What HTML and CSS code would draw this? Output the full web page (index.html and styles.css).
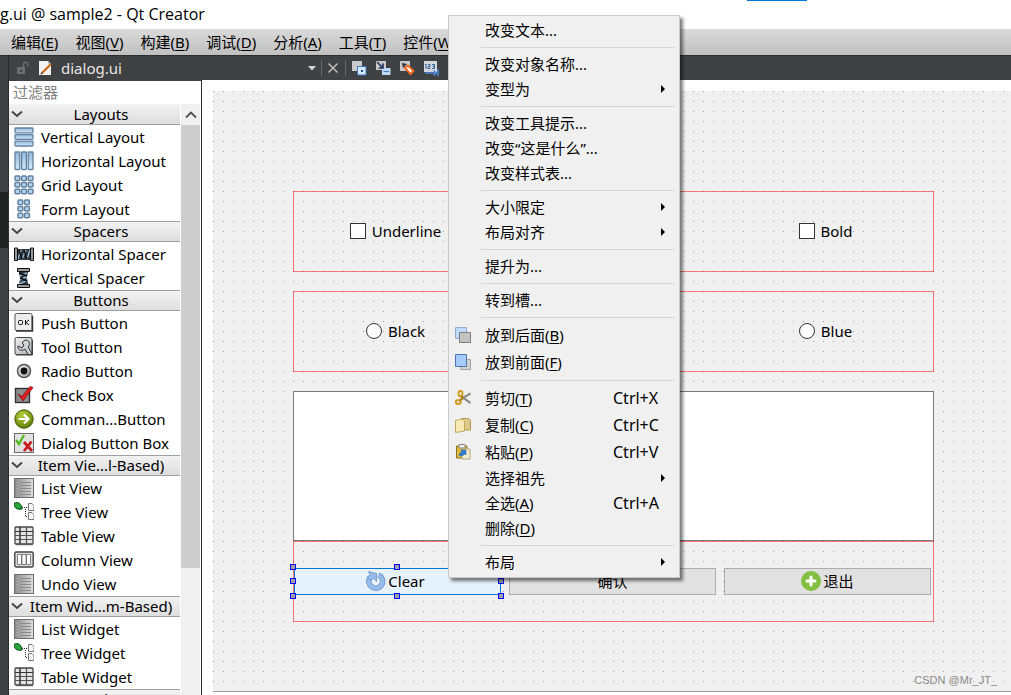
FILE: index.html
```html
<!DOCTYPE html>
<html lang="zh-CN">
<head>
<meta charset="utf-8">
<title>dialog.ui @ sample2 - Qt Creator</title>
<link rel="stylesheet" href="styles.css">
</head>
<body>
<svg class="defs" aria-hidden="true">
  <defs>
    <linearGradient id="blue" x1="0" y1="0" x2="0" y2="1"><stop offset="0" stop-color="#8fb9dc"/><stop offset="1" stop-color="#d3ebfb"/></linearGradient>
    <linearGradient id="grey" x1="0" y1="0" x2="1" y2="1"><stop offset="0" stop-color="#f4f4f4"/><stop offset="1" stop-color="#a8a8a8"/></linearGradient>
    <linearGradient id="list" x1="0" y1="0" x2="1" y2="0"><stop offset="0" stop-color="#8a8a8a"/><stop offset="1" stop-color="#dedede"/></linearGradient>
    <radialGradient id="olive" cx=".4" cy=".3" r=".8"><stop offset="0" stop-color="#b5cf3a"/><stop offset="1" stop-color="#567400"/></radialGradient>
    <symbol id="i-chev" viewBox="0 0 12 8"><path d="M1 1.500L6 6L11 1.500" fill="none" stroke="#444" stroke-width="2"/></symbol>
    <symbol id="i-vl" viewBox="0 0 20 20"><g fill="url(#blue)" stroke="#64809f" stroke-width="1.300"><rect x="1" y="1" width="18" height="4.800" rx=".8"/><rect x="1" y="7.600" width="18" height="4.800" rx=".8"/><rect x="1" y="14.200" width="18" height="4.800" rx=".8"/></g></symbol>
    <symbol id="i-hl" viewBox="0 0 20 20"><g fill="url(#blue)" stroke="#64809f" stroke-width="1.300"><rect x="1" y="1" width="4.800" height="17.500" rx=".8"/><rect x="7.600" y="1" width="4.800" height="17.500" rx=".8"/><rect x="14.200" y="1" width="4.800" height="17.500" rx=".8"/></g></symbol>
    <symbol id="i-gl" viewBox="0 0 20 20"><g fill="#b4d8f4" stroke="#64809f" stroke-width="1.500"><rect x="1" y="1" width="4.800" height="4.500" rx="1"/><rect x="7.600" y="1" width="4.800" height="4.500" rx="1"/><rect x="14.200" y="1" width="4.800" height="4.500" rx="1"/><rect x="1" y="7.600" width="4.800" height="4.500" rx="1"/><rect x="7.600" y="7.600" width="4.800" height="4.500" rx="1"/><rect x="14.200" y="7.600" width="4.800" height="4.500" rx="1"/><rect x="1" y="14.200" width="4.800" height="4.500" rx="1"/><rect x="7.600" y="14.200" width="4.800" height="4.500" rx="1"/><rect x="14.200" y="14.200" width="4.800" height="4.500" rx="1"/></g></symbol>
    <symbol id="i-fl" viewBox="0 0 20 20"><g fill="#b4d8f4" stroke="#64809f" stroke-width="1.500"><rect x="4" y="1" width="4.800" height="4.500" rx="1"/><rect x="10.600" y="1" width="4.800" height="4.500" rx="1"/><rect x="4" y="7.600" width="4.800" height="4.500" rx="1"/><rect x="10.600" y="7.600" width="4.800" height="4.500" rx="1"/><rect x="4" y="14.200" width="4.800" height="4.500" rx="1"/><rect x="10.600" y="14.200" width="4.800" height="4.500" rx="1"/></g></symbol>
    <symbol id="i-hs" viewBox="0 0 20 20"><path d="M3 5H17V16H3Z" fill="#303a42"/><path d="M4 15L7 6M8 15L12 6M13 15L16 6" stroke="#93b9d2" stroke-width="1.400"/><path d="M5 6L8 15M10 6L13 15" stroke="#0a0a0a" stroke-width="1.500"/><path d="M.5 4H3.500V16.500H.5ZM16.500 4H19.500V16.500H16.500Z" fill="#9a9a9a" stroke="#111"/></symbol>
    <symbol id="i-vs" viewBox="0 0 20 20"><path d="M4.500 3H14.500L12.500 10L14.500 17H4.500L6.500 10Z" fill="#303a42"/><path d="M5 8L13 5M6 12L13 8.500M5 16L14 12" stroke="#93b9d2" stroke-width="1.400"/><path d="M5 5L13 8M6 10L13 13" stroke="#0a0a0a" stroke-width="1.500"/><path d="M3.500 .5H15.500V3.500H3.500ZM3.500 16.500H15.500V19.500H3.500Z" fill="#9a9a9a" stroke="#111"/></symbol>
    <symbol id="i-pb" viewBox="0 0 20 20"><rect x="1" y=".5" width="17" height="17" rx="1.500" fill="#ededed" stroke="#555"/><path d="M2 18H18.500V3" fill="none" stroke="#333" stroke-width="1.400"/><rect x="4.500" y="7.500" width="4" height="4" rx="1" fill="none" stroke="#111"/><path d="M11.500 7V12M15 7L12 9.500L15 12" fill="none" stroke="#111"/></symbol>
    <symbol id="i-tb" viewBox="0 0 20 20"><rect x="1" y=".5" width="17" height="17" rx="1.500" fill="url(#grey)" stroke="#444"/><path d="M2 18H18.500V3" fill="none" stroke="#444"/><path d="M11 3C15 3 17 7 14 10L18 17L14.500 18L11 12C7 15 3 12 4 9L8 11L10 8L8 6Z" fill="#d2d6da" stroke="#333"/></symbol>
    <symbol id="i-rb" viewBox="0 0 20 20"><circle cx="10" cy="10" r="6.500" fill="url(#grey)" stroke="#555" stroke-width="1.500"/><circle cx="10" cy="10" r="3.400" fill="#111"/></symbol>
    <symbol id="i-cb" viewBox="0 0 20 20"><rect x="1.500" y="3.500" width="14" height="14" fill="#8c8c8c" stroke="#333" stroke-width="1.400"/><path d="M4 9L8 11.500L16 1.500L19 2.500L9 16Z" fill="#e51b1b" stroke="#7c0c0c" stroke-width=".7"/></symbol>
    <symbol id="i-cl" viewBox="0 0 20 20"><circle cx="10" cy="10" r="9.200" fill="url(#olive)" stroke="#425800"/><path d="M4.500 10H14M10 5.500L14.500 10L10 14.500" fill="none" stroke="#fff" stroke-width="2.200"/></symbol>
    <symbol id="i-db" viewBox="0 0 20 20"><rect x=".5" y=".5" width="19" height="19" fill="#e1e1e1" stroke="#6c6c6c"/><path d="M2 7L5 11L10 2" fill="none" stroke="#56bb28" stroke-width="2.400"/><path d="M10 9L18 18M17.500 8.500L10 18" stroke="#c41c1c" stroke-width="2.800"/></symbol>
    <symbol id="i-lv" viewBox="0 0 20 20"><rect x=".5" y=".5" width="19" height="19" fill="url(#list)" stroke="#6e6e6e"/><path d="M6 4.500H17M6 7.500H17M6 10.500H17M6 13.500H17M6 16.500H17" stroke="#888"/><path d="M2 4.500H4.500M2 7.500H4.500M2 10.500H4.500M2 13.500H4.500M2 16.500H4.500" stroke="#aaa"/></symbol>
    <symbol id="i-tv" viewBox="0 0 20 20"><path d="M0 1.500C4-1 8 2 8 7C3 8 0 6 0 1.500Z" fill="#27a43a" stroke="#0c4c16"/><path d="M8 5.500H14M11.500 7V14.500H14" fill="none" stroke="#222" stroke-dasharray="1 1"/><path d="M14.500 1.500H18L20 3.500V8.500H14.500ZM14.500 10.500H18L20 12.500V17.500H14.500Z" fill="#f5f5f5" stroke="#777"/></symbol>
    <symbol id="i-tab" viewBox="0 0 20 20"><rect x="1" y="1" width="18" height="17" rx="1" fill="#e4e4e4" stroke="#444" stroke-width="1.300"/><path d="M1 5.500H19M1 9.500H19M1 13.500H19M6 1V18M12.500 1V18" stroke="#555" stroke-width="1.200"/><path d="M6 1V18M1 5.500H19" stroke="#333"/><path d="M2 18.700H19" stroke="#555"/></symbol>
    <symbol id="i-cv" viewBox="0 0 20 20"><rect x=".8" y="2" width="18.400" height="15" rx="1.500" fill="#dcdcdc" stroke="#444" stroke-width="1.400"/><path d="M3.500 4.500H7.500V14.500H3.500ZM8 4.500H12V14.500H8ZM12.500 4.500H16.500V14.500H12.500Z" fill="#fff" stroke="#666" stroke-width=".8"/></symbol>
  </defs>
</svg>

<div class="app">
  <header class="titlebar"><span class="title">g.ui @ sample2 - Qt Creator</span><span class="accent"></span></header>
  <nav class="menubar">
    <button>编辑(<u>E</u>)</button><button>视图(<u>V</u>)</button><button>构建(<u>B</u>)</button><button>调试(<u>D</u>)</button><button>分析(<u>A</u>)</button><button>工具(<u>T</u>)</button><button>控件(<u>W</u>)</button>
  </nav>
  <div class="body">
    <div class="modes"><span class="mode-active"></span></div>
    <div class="main">
      <div class="toolbar">
        <svg class="lock" viewBox="0 0 14 14"><path d="M1 6H9V13H1Z" fill="#6b6c6d"/><path d="M7.500 6V3.500C7.500 .5 12 .5 12 3.500V5.500" fill="none" stroke="#6b6c6d" stroke-width="1.500"/><path d="M4 9H6V11H4Z" fill="#404142"/></svg>
        <svg class="file" viewBox="0 0 16 16"><path d="M1 1H10L13 4V15H1Z" fill="#f2f2f0"/><path d="M10 1V4H13" fill="#bbb"/><path d="M4 13L13 4" stroke="#c96a10" stroke-width="2.200"/><path d="M2.500 14.500L3.200 12L5 13.800Z" fill="#333"/></svg>
        <select class="doc" aria-label="dialog.ui"><option>dialog.ui</option></select>
        <svg class="drop" viewBox="0 0 8 5"><path d="M0 0H8L4 4.500Z" fill="#d5d5d5"/></svg>
        <span class="vsep"></span>
        <button class="tool" aria-label="关闭"><svg viewBox="0 0 16 16"><path d="M3.500 3.500L12.500 12.500M12.500 3.500L3.500 12.500" stroke="#c8c8c8" stroke-width="1.300"/></svg></button>
        <span class="vsep"></span>
        <div class="tools">
          <button class="tool" aria-label="编辑控件"><svg viewBox="0 0 16 16"><path d="M1 1H11V11H1Z" fill="#c9c9c9"/><path d="M6.500 6.500H15V15H6.500Z" fill="#d5e8ff" stroke="#3c78c0"/><path d="M10 10H12V12H10Z" fill="#1e4a8c"/></svg></button>
          <button class="tool" aria-label="编辑信号/槽"><svg viewBox="0 0 16 16"><path d="M1 1H11V10H1Z" fill="#c9c9c9"/><path d="M7 8H15.500V15H7Z" fill="#bcd8f8"/><path d="M8.500 11.500H14" stroke="#467cb8"/><path d="M2 2L7.500 7.500M8 3.500V8H3.500" fill="none" stroke="#1b355c" stroke-width="1.600"/></svg></button>
          <button class="tool" aria-label="编辑伙伴"><svg viewBox="0 0 16 16"><path d="M1 1H11V11H1Z" fill="#c9c9c9"/><path d="M3 3L8 4L4 8Z" fill="#333"/><path d="M6 8L9 5.500L14.500 11L11.500 14Z" fill="#fff" stroke="#ef6820" stroke-width="2"/></svg></button>
          <button class="tool" aria-label="编辑Tab顺序"><svg viewBox="0 0 16 16"><path d="M1 1H14V12H1Z" fill="#d4d9df"/><path d="M2 5L3 4V9M5 4.500H7V6.500H5V8.500H7.500M9 4.500H11.500V8.500H9M9.500 6.500H11" fill="none" stroke="#2e5c9a"/><path d="M2 13H13M10.500 10.500L13.500 13L10.500 15.500M15 9V16" fill="none" stroke="#4b86d6" stroke-width="1.500"/></svg></button>
        </div>
      </div>
      <div class="workspace">
        <aside class="widgetbox">
          <input class="filter" type="text" placeholder="过滤器" aria-label="过滤器">
          <div class="boxbody">
            <div class="list">
              <h2><svg><use href="#i-chev"/></svg>Layouts</h2>
              <ul>
                <li><svg><use href="#i-vl"/></svg>Vertical Layout</li>
                <li><svg><use href="#i-hl"/></svg>Horizontal Layout</li>
                <li><svg><use href="#i-gl"/></svg>Grid Layout</li>
                <li><svg><use href="#i-fl"/></svg>Form Layout</li>
              </ul>
              <h2><svg><use href="#i-chev"/></svg>Spacers</h2>
              <ul>
                <li><svg><use href="#i-hs"/></svg>Horizontal Spacer</li>
                <li><svg><use href="#i-vs"/></svg>Vertical Spacer</li>
              </ul>
              <h2><svg><use href="#i-chev"/></svg>Buttons</h2>
              <ul>
                <li><svg><use href="#i-pb"/></svg>Push Button</li>
                <li><svg><use href="#i-tb"/></svg>Tool Button</li>
                <li><svg><use href="#i-rb"/></svg>Radio Button</li>
                <li><svg><use href="#i-cb"/></svg>Check Box</li>
                <li><svg><use href="#i-cl"/></svg>Comman...Button</li>
                <li><svg><use href="#i-db"/></svg>Dialog Button Box</li>
              </ul>
              <h2><svg><use href="#i-chev"/></svg>Item Vie...l-Based)</h2>
              <ul>
                <li><svg><use href="#i-lv"/></svg>List View</li>
                <li><svg><use href="#i-tv"/></svg>Tree View</li>
                <li><svg><use href="#i-tab"/></svg>Table View</li>
                <li><svg><use href="#i-cv"/></svg>Column View</li>
                <li><svg><use href="#i-lv"/></svg>Undo View</li>
              </ul>
              <h2><svg><use href="#i-chev"/></svg>Item Wid...m-Based)</h2>
              <ul>
                <li><svg><use href="#i-lv"/></svg>List Widget</li>
                <li><svg><use href="#i-tv"/></svg>Tree Widget</li>
                <li><svg><use href="#i-tab"/></svg>Table Widget</li>
              </ul>
              <h2><svg><use href="#i-chev"/></svg>Containers</h2>
            </div>
            <div class="scrollbar"><button aria-label="向上滚动"><svg viewBox="0 0 12 8"><path d="M1 6.500L6 1.500L11 6.500" fill="none" stroke="#505050" stroke-width="1.800"/></svg></button><span class="thumb"></span></div>
          </div>
        </aside>
        <main class="canvas">
          <form class="dialog">
            <div class="group row">
              <label><input type="checkbox">Underline</label>
              <span></span>
              <label><input type="checkbox">Bold</label>
            </div>
            <div class="group row">
              <label><input type="radio" name="color">Black</label>
              <span></span>
              <label><input type="radio" name="color">Blue</label>
            </div>
            <div class="editor-block">
              <textarea class="editor" aria-label="文本"></textarea>
              <div class="group row buttons">
                <div class="selected">
                  <button type="button" class="btn primary"><svg viewBox="0 0 20 20"><path d="M12.500 4A6.900 6.900 0 1 1 4 6.500" fill="none" stroke="#7390c0" stroke-width="5.400"/><path d="M12.500 4A6.900 6.900 0 1 1 4 6.500" fill="none" stroke="#94bdec" stroke-width="4"/><path d="M2.500 .5L10.500 2.500L10.500 10.500L8 7.500L4 9.500L1.500 6L4 4Z" fill="#94bdec" stroke="#7390c0" stroke-width=".8"/></svg>Clear</button>
                  <i class="h nw"></i><i class="h n"></i><i class="h ne"></i><i class="h w"></i><i class="h e"></i><i class="h sw"></i><i class="h s"></i><i class="h se"></i>
                </div>
                <button type="button" class="btn">确认</button>
                <button type="button" class="btn"><svg viewBox="0 0 20 20"><circle cx="10" cy="10" r="10" fill="#83bf41"/><path d="M10 6V14M6 10H14" stroke="#fff" stroke-width="3" stroke-linecap="round"/></svg>退出</button>
              </div>
            </div>
            <span class="watermark">CSDN @Mr_JT_</span>
          </form>
        </main>
      </div>
    </div>
  </div>

  <div class="context" role="menu">
    <button>改变文本...</button>
    <hr>
    <button>改变对象名称...</button>
    <button class="sub">变型为</button>
    <hr>
    <button>改变工具提示...</button>
    <button>改变“这是什么”...</button>
    <button>改变样式表...</button>
    <hr>
    <button class="sub">大小限定</button>
    <button class="sub">布局对齐</button>
    <hr>
    <button>提升为...</button>
    <hr>
    <button>转到槽...</button>
    <hr>
    <button class="tall"><svg viewBox="0 0 16 16"><path d="M.5 .5H11.500V11.500H.5Z" fill="#bfd9fb" stroke="#94abc9"/><path d="M4.500 5.500H15.500V15.500H4.500Z" fill="#c3c3c3" stroke="#7e7e7e"/></svg><span>放到后面(<u>B</u>)</span></button>
    <button class="tall"><svg viewBox="0 0 16 16"><path d="M5.500 5.500H15.500V15.500H5.500Z" fill="#d2d2d2" stroke="#a5a5a5"/><path d="M.5 .5H11.500V12.500H.5Z" fill="#a5cbfd" stroke="#4f76ac"/></svg><span>放到前面(<u>F</u>)</span></button>
    <hr>
    <button class="tall"><svg viewBox="0 0 16 16"><path d="M6 9L15.500 3.500M6.500 6.500L15.500 13" stroke="#8e9085" stroke-width="2.200"/><ellipse cx="5.500" cy="3.500" rx="2" ry="2.800" fill="none" stroke="#d09a1e" stroke-width="2"/><ellipse cx="3.200" cy="12" rx="2.500" ry="2" fill="none" stroke="#d09a1e" stroke-width="2"/><path d="M5 10.500L8.500 7.500M6 6L8 8" stroke="#b08018" stroke-width="2"/></svg><span>剪切(<u>T</u>)</span><kbd>Ctrl+X</kbd></button>
    <button class="tall"><svg viewBox="0 0 16 16"><path d="M6 1.500H13L15.500 3V13H6Z" fill="#ddc98a" stroke="#b59d58"/><path d="M.5 3.500L7 2L9.500 4V14L.5 15.500Z" fill="#f8eab5" stroke="#c2a95e"/></svg><span>复制(<u>C</u>)</span><kbd>Ctrl+C</kbd></button>
    <button class="tall"><svg viewBox="0 0 16 16"><path d="M1.500 2H12V14H1.500Z" fill="#dfba42" stroke="#8d701d"/><path d="M4 .5H10V4H4Z" fill="#eee" stroke="#888"/><path d="M7 5H15V15H7Z" fill="#f4ecd0" stroke="#b6a87b"/><path d="M4 11C4 9 6 8.500 7 9L6 6H11V11L9.500 10C8 12 6 12.500 4 11Z" fill="#367cd2" stroke="#235896" stroke-width=".5"/></svg><span>粘贴(<u>P</u>)</span><kbd>Ctrl+V</kbd></button>
    <button class="sub">选择祖先</button>
    <button><span>全选(<u>A</u>)</span><kbd>Ctrl+A</kbd></button>
    <button><span>删除(<u>D</u>)</span></button>
    <hr>
    <button class="sub">布局</button>
  </div>
</div>
</body>
</html>
```
FILE: styles.css
```css
* { box-sizing: border-box; }

body {
  margin: 0;
  background: #fff;
  color: #000;
  font: 15px/20px "Noto Sans", "Noto Sans CJK SC", sans-serif;
}

button, input, select, textarea, kbd { font: inherit; color: inherit; }
button { margin: 0; padding: 0; border: 0; background: none; text-align: left; white-space: nowrap; }
u { text-underline-offset: 2px; }

.defs { position: absolute; width: 0; height: 0; }

.app { position: relative; display: flex; flex-direction: column; height: 100vh; overflow: hidden; }

/* Title and menu bar */
.titlebar { position: relative; flex: none; height: 29px; padding: 4px 0; font: 16px/20px "Open Sans", sans-serif; }
.accent { position: absolute; top: 0; left: 747px; width: 60px; height: 1px; background: #0078d7; }

.menubar {
  flex: none;
  display: flex;
  gap: 17px;
  height: 26px;
  padding: 3px 11px;
  background: linear-gradient(#dadada, #c0c0c0);
}

.body { flex: 1; display: flex; min-height: 0; }
.modes { flex: none; width: 9px; padding-top: 136px; background: #404142; border-right: 1px solid #2c2d2e; border-top: 1px solid #2c2d2e; }
.mode-active { display: block; height: 56px; background: #222423; }
.main { flex: 1; display: flex; flex-direction: column; min-width: 0; }

/* Document toolbar */
.toolbar {
  flex: none;
  display: flex;
  align-items: center;
  height: 25px;
  padding-left: 7px;
  background: #404142;
  border-top: 1px solid #2c2d2e;
}
.lock { width: 14px; height: 14px; margin-right: 8px; }
.file { width: 16px; height: 16px; margin-right: 7px; }
.doc { width: 247px; height: 22px; padding: 0; border: 0; background: none; color: #e6e6e6; appearance: none; }
.drop { width: 8px; height: 5px; margin-right: 5px; }
.vsep { width: 1px; height: 16px; background: #646566; }
.tool { width: 16px; height: 16px; }
.tool svg { display: block; width: 16px; height: 16px; }
.vsep + .tool { margin: 0 4px 0 3px; }
.tools { display: flex; gap: 8px; padding-left: 5px; }

.workspace { flex: 1; display: flex; min-height: 0; }

/* Widget box */
.widgetbox { flex: none; display: flex; flex-direction: column; width: 193px; border-right: 1px solid #2c2d2e; background: #fff; }
.filter { flex: none; height: 24px; padding: 0 4px 2px; border: 0; border-top: 1px solid #404142; outline: 0; background: #fff; }
.filter::placeholder { color: #808080; opacity: 1; }
.boxbody { flex: 1; display: flex; min-height: 0; padding-right: 1px; }
.list { flex: 1; overflow: hidden; }
.list h2 {
  position: relative;
  height: 21px;
  margin: 0;
  padding-left: 13px;
  border-top: 1px solid #a0a0a0;
  border-bottom: 1px solid #a0a0a0;
  background: linear-gradient(#f2f2f2, #dedede);
  font-size: 15px;
  font-weight: 400;
  line-height: 18px;
  text-align: center;
  white-space: nowrap;
}
.list h2:first-child { border-top-color: #f2f2f2; }
.list h2 svg { position: absolute; left: 2px; top: 5px; width: 12px; height: 8px; }
.list ul { margin: 0; padding: 0; list-style: none; }
.list li { display: flex; align-items: center; gap: 7px; height: 24px; padding-left: 5px; white-space: nowrap; }
.list li svg { flex: none; width: 20px; height: 20px; }
.scrollbar { flex: none; width: 20px; border-left: 1px solid #fff; background: #f0f0f0; }
.scrollbar button { display: flex; align-items: center; justify-content: center; width: 100%; height: 21px; }
.scrollbar svg { width: 12px; height: 8px; }
.thumb { display: block; height: 75%; background: #cdcdcd; }

/* Form editor */
.canvas { flex: 1; min-width: 0; padding: 11px 0 3px 11px; background: #fff; }
.dialog {
  position: relative;
  display: flex;
  flex-direction: column;
  gap: 19px;
  height: 100%;
  padding: 100px 77px 0 80px;
  border-bottom: 1px solid #a0a0a0;
  background-image: linear-gradient(90deg, transparent 1px, #f0f0f0 1px), linear-gradient(#a0a0a0 1px, #f0f0f0 1px);
  background-size: 10px 10px;
}
.group { border: 1px solid rgba(255, 0, 0, 0.5); }
.row { display: grid; grid-template-columns: repeat(3, 1fr); gap: 8px; align-items: center; height: 81px; padding-right: 2px; }
.row label { display: flex; align-items: center; justify-content: center; gap: 6px; padding: 0 4px 2px 0; line-height: 18px; }
.row input { flex: none; width: 16px; height: 16px; margin: 0; border: 1px solid #333; background: #fff; appearance: none; }
.row input[type="radio"] { border-radius: 50%; }
.editor { display: block; width: 100%; height: 150px; border: 1px solid #7a7a7a; outline: 0; background: #fff; resize: none; }
.selected { position: relative; }
.btn {
  display: flex;
  align-items: center;
  justify-content: center;
  gap: 2px;
  width: 100%;
  height: 27px;
  padding-bottom: 2px;
  border: 1px solid #adadad;
  background: #e1e1e1;
}
.btn svg { width: 20px; height: 20px; }
.btn.primary { padding-right: 4px; border-color: #0078d7; background: #e5f1fb; }
.h { position: absolute; width: 6px; height: 6px; border: 1px solid #00f; background: #a0a0a0; }
.nw, .n, .ne { top: -4px; }
.sw, .s, .se { bottom: -4px; }
.w, .e { top: 10px; }
.nw, .w, .sw { left: -4px; }
.ne, .e, .se { right: -3px; }
.n, .s { left: calc(50% - 4px); }
.watermark { position: absolute; right: 14px; bottom: 2px; color: #8a8a8a; font: 11px/18px "Liberation Sans", sans-serif; }

/* Context menu */
.context {
  position: absolute;
  top: 15px;
  left: 448px;
  display: flex;
  flex-direction: column;
  width: 232px;
  padding: 2px;
  border: 1px solid #ccc;
  background: #f0f0f0;
  box-shadow: 3px 3px 3px rgba(0, 0, 0, 0.5);
}
.context button { position: relative; display: flex; align-items: center; height: 25px; padding: 0 16px 2px 34px; }
.context .tall { height: 27px; }
.context svg { position: absolute; left: 4px; width: 16px; height: 16px; }
.context kbd { width: 48px; margin-left: auto; font-size: 16px; }
.context hr { width: calc(100% - 32px); height: 1px; margin: 4px 2px 4px 30px; border: 0; background: #d5d5d5; }
.sub::after { content: ""; margin-left: auto; margin-right: -4px; border: 4px solid transparent; border-left-color: #000; border-right-width: 0; }
```
